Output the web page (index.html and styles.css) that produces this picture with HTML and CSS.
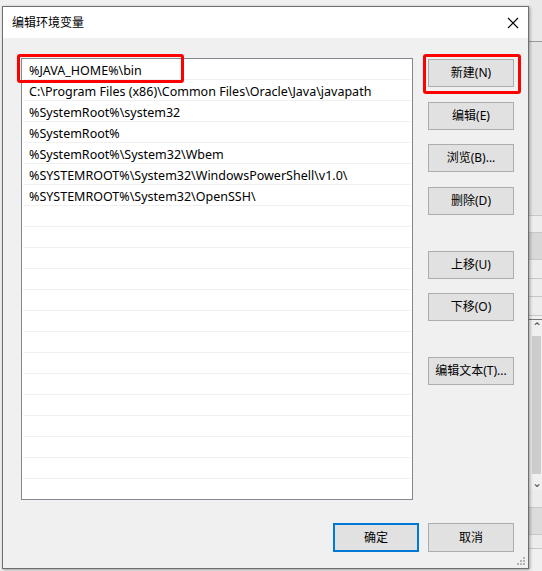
FILE: index.html
```html
<!DOCTYPE html>
<html lang="zh-CN">
<head>
<meta charset="utf-8">
<title>编辑环境变量</title>
<link rel="stylesheet" href="styles.css">
</head>
<body>
<div class="desktop">
  <div class="bgwin">
    <div class="bg-head"></div>
    <div class="bg-area a1"></div>
    <div class="bg-line r1"></div>
    <div class="bg-line r2"></div>
    <div class="bg-line r3"></div>
    <div class="bg-line r4"></div>
    <div class="bg-line r5"></div>
    <div class="bg-line r6"></div>
    <div class="bg-scroll">
      <div class="sc-arrow">&#8963;</div>
      <div class="sc-thumb"></div>
      <div class="sc-arrow">&#8964;</div>
    </div>
    <div class="bg-line r7"></div>
    <div class="bg-line r8"></div>
    <div class="bg-line r9"></div>
  </div>

  <div class="dialog">
    <div class="titlebar">
      <span class="title">编辑环境变量</span>
      <svg class="close" width="12" height="12" viewBox="0 0 12 12"><path d="M1 1 L11 11 M11 1 L1 11" stroke="#000" stroke-width="1.1" fill="none"/></svg>
    </div>
    <div class="body">
      <div class="main">
        <div class="listbox">
          <div class="row"><span class="mark"></span>%JAVA_HOME%\bin</div>
          <div class="row">C:\Program Files (x86)\Common Files\Oracle\Java\javapath</div>
          <div class="row">%SystemRoot%\system32</div>
          <div class="row">%SystemRoot%</div>
          <div class="row">%SystemRoot%\System32\Wbem</div>
          <div class="row">%SYSTEMROOT%\System32\WindowsPowerShell\v1.0\</div>
          <div class="row">%SYSTEMROOT%\System32\OpenSSH\</div>
          <div class="row"></div>
          <div class="row"></div>
          <div class="row"></div>
          <div class="row"></div>
          <div class="row"></div>
          <div class="row"></div>
          <div class="row"></div>
          <div class="row"></div>
          <div class="row"></div>
          <div class="row"></div>
          <div class="row"></div>
          <div class="row"></div>
          <div class="row"></div>
        </div>
        <div class="side">
          <button class="btn"><span class="mark"></span>新建(N)</button>
          <button class="btn m15">编辑(E)</button>
          <button class="btn m14">浏览(B)...</button>
          <button class="btn m15">删除(D)</button>
          <button class="btn m36">上移(U)</button>
          <button class="btn m14">下移(O)</button>
          <button class="btn m36">编辑文本(T)...</button>
        </div>
      </div>
      <div class="footer">
        <button class="btn default">确定</button>
        <button class="btn">取消</button>
      </div>
      <svg class="grip" width="9" height="9" viewBox="0 0 9 9">
        <g fill="#b4b4b4">
          <rect x="6" y="0" width="2" height="2"/>
          <rect x="3" y="3" width="2" height="2"/><rect x="6" y="3" width="2" height="2"/>
          <rect x="0" y="6" width="2" height="2"/><rect x="3" y="6" width="2" height="2"/><rect x="6" y="6" width="2" height="2"/>
        </g>
      </svg>
    </div>
  </div>
</div>
</body>
</html>
```

FILE: styles.css
```css
* { box-sizing: border-box; }
html, body { margin: 0; padding: 0; }
body {
  width: 542px;
  height: 571px;
  overflow: hidden;
  font-family: "Noto Sans", "Noto Sans CJK SC", sans-serif;
  font-size: 12px;
  color: #000;
}
.desktop {
  position: relative;
  width: 542px;
  height: 571px;
  background: #f0f0f0;
}

/* background window visible at the right edge */
.bgwin {
  display: flex;
  flex-direction: column;
  height: 571px;
  padding-left: 529px;
  background: #f0f0f0;
}
.bg-head { height: 42px; background: #e9e9e9; border-bottom: 1px solid #9a9a9a; }
.bg-area { background: #e4e4e4; }
.a1 { height: 174px; border-bottom: 1px solid #c8c8c8; }
.bg-line { border-bottom: 1px solid #c8c8c8; }
.r1 { height: 17px; background: #ededed; }
.r2 { height: 27px; background: #d8d8d8; }
.r3 { height: 19px; background: #ededed; }
.r4 { height: 18px; background: #ededed; }
.r5 { height: 19px; background: #ededed; }
.r6 { height: 4px; border-bottom: 1px solid #777; }
.bg-scroll {
  height: 170px;
  display: flex;
  flex-direction: column;
  padding-left: 3px;
  background: #f0f0f0;
}
.sc-arrow { height: 14px; font-size: 12px; line-height: 14px; color: #555; }
.sc-thumb { flex: 1; background: #cdcdcd; margin: 2px 1px 2px 0; }
.r7 { height: 18px; background: #ececec; }
.r8 { height: 27px; background: #dcdcdc; }
.r9 { height: 14px; background: #ececec; }

/* dialog window */
.dialog {
  position: absolute;
  left: 2px;
  top: 6px;
  width: 527px;
  height: 563px;
  border: 1px solid #6f6f6f;
  background: #f0f0f0;
  box-shadow: 1px 1px 3px rgba(0,0,0,0.35);
  display: flex;
  flex-direction: column;
}
.titlebar {
  height: 31px;
  background: #fff;
  display: flex;
  align-items: center;
  justify-content: space-between;
  padding: 1px 9px 0 9px;
}
.title { font-size: 12px; line-height: 16px; }
.close { display: block; }

.body {
  position: relative;
  flex: 1;
  display: flex;
  flex-direction: column;
  padding: 20px 13px 0 18px;
}
.main {
  display: flex;
  gap: 15px;
}
.listbox {
  width: 392px;
  height: 442px;
  background: #fff;
  border: 1px solid #828790;
  padding: 0 1px;
  display: flex;
  flex-direction: column;
}
.row {
  position: relative;
  height: 21px;
  flex: none;
  border-bottom: 1px solid #f0f0f0;
  padding: 4px 0 0 6px;
  font-size: 12.5px;
  line-height: 16px;
  white-space: nowrap;
}
.mark {
  position: absolute;
  border: 3px solid #ff0000;
  border-radius: 3px;
  pointer-events: none;
}
.row .mark { left: -6px; top: -5px; width: 167px; height: 29px; }

.side {
  display: flex;
  flex-direction: column;
  padding-top: 1px;
}
.btn {
  position: relative;
  width: 86px;
  height: 28px;
  padding: 0;
  background: #e1e1e1;
  border: 1px solid #adadad;
  border-radius: 0;
  font-family: "Noto Sans", "Noto Sans CJK SC", sans-serif;
  font-size: 12px;
  color: #000;
  line-height: 26px;
}
.btn.m14 { margin-top: 14px; }
.btn.m15 { margin-top: 15px; }
.btn.m36 { margin-top: 36px; }
.btn .mark { left: -6px; top: -6px; width: 98px; height: 40px; }

.footer {
  display: flex;
  justify-content: flex-end;
  gap: 9px;
  margin-top: 23px;
  padding-right: 1px;
}
.footer .btn { height: 29px; }
.btn.default { border: 2px solid #0078d7; line-height: 25px; }

.grip {
  position: absolute;
  right: 2px;
  bottom: 2px;
}
```
